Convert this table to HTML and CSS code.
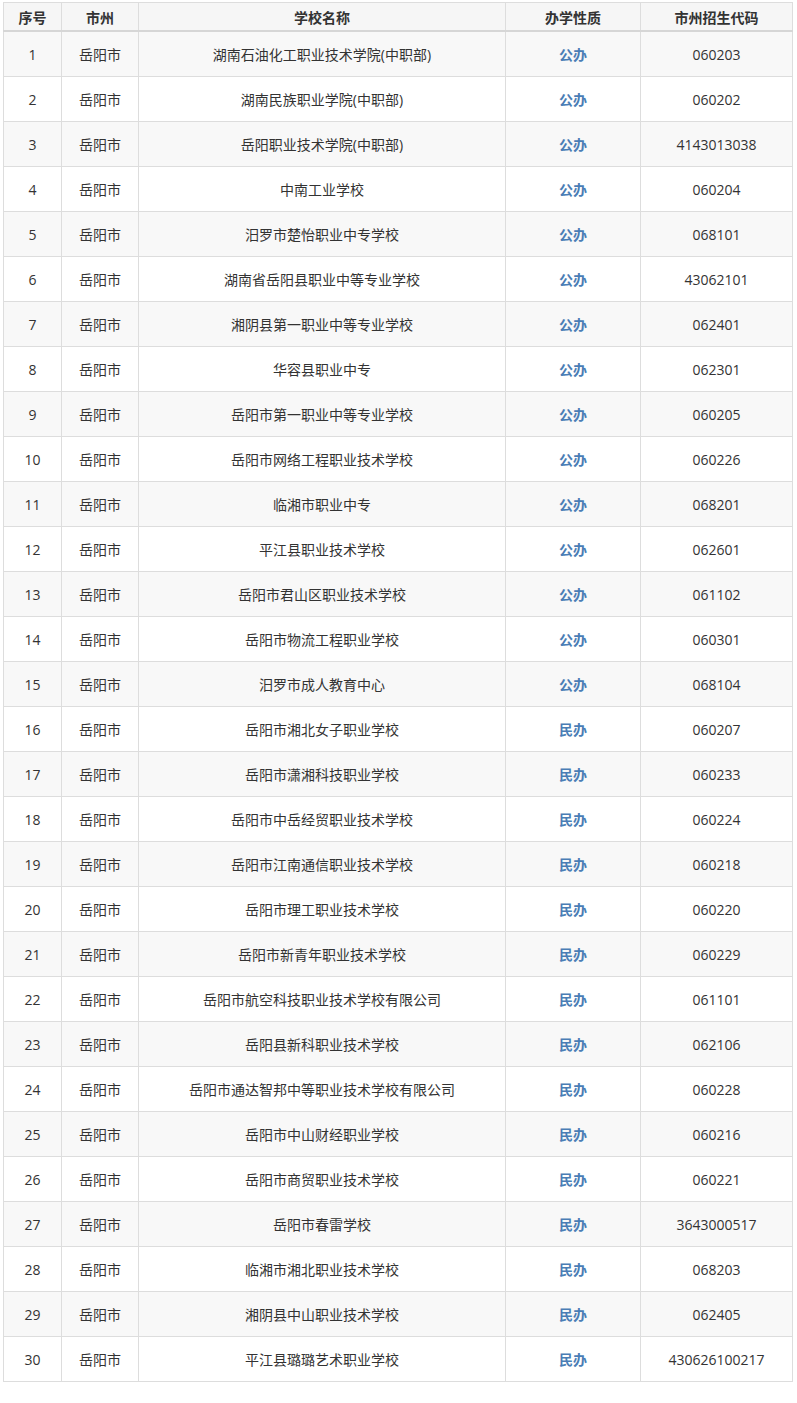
FILE: index.html
```html
<!DOCTYPE html>
<html lang="zh">
<head>
<meta charset="utf-8">
<title>岳阳市中职学校</title>
<link rel="stylesheet" href="styles.css">
</head>
<body>
<table class="grid">
<colgroup>
<col class="c1"><col class="c2"><col class="c3"><col class="c4"><col class="c5">
</colgroup>
<thead>
<tr><th>序号</th><th>市州</th><th>学校名称</th><th>办学性质</th><th>市州招生代码</th></tr>
</thead>
<tbody>
<tr><td>1</td><td>岳阳市</td><td>湖南石油化工职业技术学院(中职部)</td><td class="kind">公办</td><td>060203</td></tr>
<tr><td>2</td><td>岳阳市</td><td>湖南民族职业学院(中职部)</td><td class="kind">公办</td><td>060202</td></tr>
<tr><td>3</td><td>岳阳市</td><td>岳阳职业技术学院(中职部)</td><td class="kind">公办</td><td>4143013038</td></tr>
<tr><td>4</td><td>岳阳市</td><td>中南工业学校</td><td class="kind">公办</td><td>060204</td></tr>
<tr><td>5</td><td>岳阳市</td><td>汨罗市楚怡职业中专学校</td><td class="kind">公办</td><td>068101</td></tr>
<tr><td>6</td><td>岳阳市</td><td>湖南省岳阳县职业中等专业学校</td><td class="kind">公办</td><td>43062101</td></tr>
<tr><td>7</td><td>岳阳市</td><td>湘阴县第一职业中等专业学校</td><td class="kind">公办</td><td>062401</td></tr>
<tr><td>8</td><td>岳阳市</td><td>华容县职业中专</td><td class="kind">公办</td><td>062301</td></tr>
<tr><td>9</td><td>岳阳市</td><td>岳阳市第一职业中等专业学校</td><td class="kind">公办</td><td>060205</td></tr>
<tr><td>10</td><td>岳阳市</td><td>岳阳市网络工程职业技术学校</td><td class="kind">公办</td><td>060226</td></tr>
<tr><td>11</td><td>岳阳市</td><td>临湘市职业中专</td><td class="kind">公办</td><td>068201</td></tr>
<tr><td>12</td><td>岳阳市</td><td>平江县职业技术学校</td><td class="kind">公办</td><td>062601</td></tr>
<tr><td>13</td><td>岳阳市</td><td>岳阳市君山区职业技术学校</td><td class="kind">公办</td><td>061102</td></tr>
<tr><td>14</td><td>岳阳市</td><td>岳阳市物流工程职业学校</td><td class="kind">公办</td><td>060301</td></tr>
<tr><td>15</td><td>岳阳市</td><td>汨罗市成人教育中心</td><td class="kind">公办</td><td>068104</td></tr>
<tr><td>16</td><td>岳阳市</td><td>岳阳市湘北女子职业学校</td><td class="kind">民办</td><td>060207</td></tr>
<tr><td>17</td><td>岳阳市</td><td>岳阳市潇湘科技职业学校</td><td class="kind">民办</td><td>060233</td></tr>
<tr><td>18</td><td>岳阳市</td><td>岳阳市中岳经贸职业技术学校</td><td class="kind">民办</td><td>060224</td></tr>
<tr><td>19</td><td>岳阳市</td><td>岳阳市江南通信职业技术学校</td><td class="kind">民办</td><td>060218</td></tr>
<tr><td>20</td><td>岳阳市</td><td>岳阳市理工职业技术学校</td><td class="kind">民办</td><td>060220</td></tr>
<tr><td>21</td><td>岳阳市</td><td>岳阳市新青年职业技术学校</td><td class="kind">民办</td><td>060229</td></tr>
<tr><td>22</td><td>岳阳市</td><td>岳阳市航空科技职业技术学校有限公司</td><td class="kind">民办</td><td>061101</td></tr>
<tr><td>23</td><td>岳阳市</td><td>岳阳县新科职业技术学校</td><td class="kind">民办</td><td>062106</td></tr>
<tr><td>24</td><td>岳阳市</td><td>岳阳市通达智邦中等职业技术学校有限公司</td><td class="kind">民办</td><td>060228</td></tr>
<tr><td>25</td><td>岳阳市</td><td>岳阳市中山财经职业学校</td><td class="kind">民办</td><td>060216</td></tr>
<tr><td>26</td><td>岳阳市</td><td>岳阳市商贸职业技术学校</td><td class="kind">民办</td><td>060221</td></tr>
<tr><td>27</td><td>岳阳市</td><td>岳阳市春雷学校</td><td class="kind">民办</td><td>3643000517</td></tr>
<tr><td>28</td><td>岳阳市</td><td>临湘市湘北职业技术学校</td><td class="kind">民办</td><td>068203</td></tr>
<tr><td>29</td><td>岳阳市</td><td>湘阴县中山职业技术学校</td><td class="kind">民办</td><td>062405</td></tr>
<tr><td>30</td><td>岳阳市</td><td>平江县璐璐艺术职业学校</td><td class="kind">民办</td><td>430626100217</td></tr>
</tbody>
</table>
</body>
</html>
```
FILE: styles.css
```css
html, body {
  margin: 0;
  padding: 0;
  background: #fff;
}
body {
  padding: 2px 0 0 3px;
  font-family: "Open Sans", "Noto Sans CJK SC", sans-serif;
  font-size: 14px;
  color: #333;
}
.grid {
  border-collapse: collapse;
  table-layout: fixed;
  width: 789px;
}
.c1 { width: 58px; }
.c2 { width: 77px; }
.c3 { width: 367px; }
.c4 { width: 135px; }
.c5 { width: 152px; }
.grid th,
.grid td {
  border: 1px solid #dddddd;
  text-align: center;
  vertical-align: middle;
  padding: 0;
  white-space: nowrap;
}
.grid th {
  height: 27px;
  font-weight: bold;
  background: #f6f6f6;
  border-bottom: 2px solid #d6d6d6;
}
.grid td {
  height: 44px;
}
.grid tbody tr:nth-child(odd) td {
  background: #f8f8f8;
}
.grid td.kind {
  color: #4a7db5;
  font-weight: bold;
}
```
